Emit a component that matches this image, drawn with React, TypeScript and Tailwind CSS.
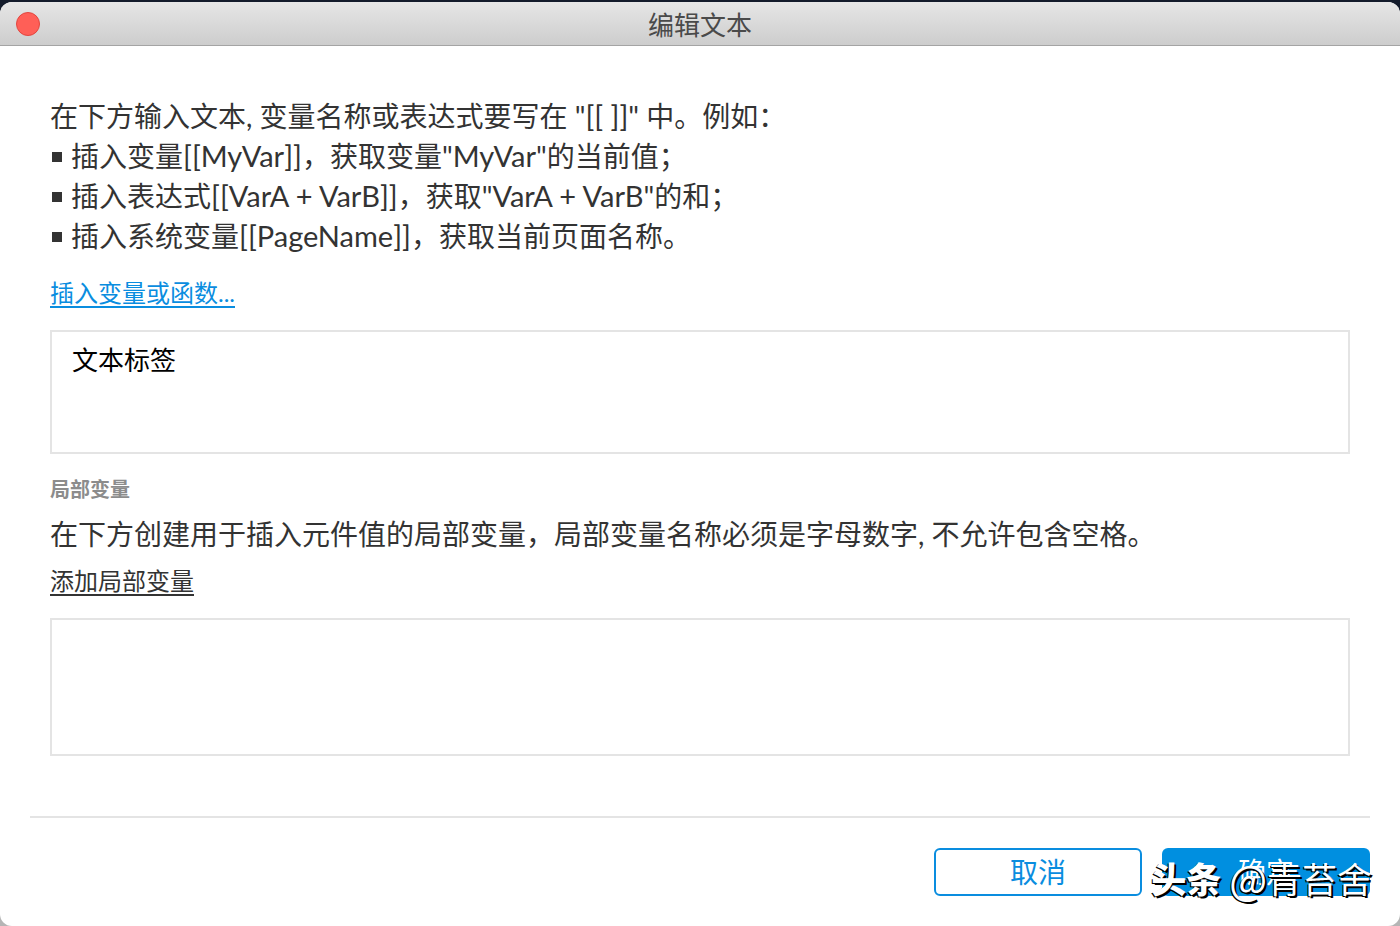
import { useState, type ReactNode } from "react";

function Code({ children }: { children: ReactNode }) {
  return <span className="text-[29px]">{children}</span>;
}

function Hint({ children }: { children: ReactNode }) {
  return (
    <li className="flex items-center gap-[9px]">
      <span className="mt-0.5 ml-0.5 size-2.5 bg-[#333333]" />
      <span>{children}</span>
    </li>
  );
}

function TitleBar() {
  return (
    <header className="relative flex h-11 shrink-0 items-center justify-center rounded-t-xl border-b border-[#a4a4a4] bg-linear-to-b from-[#e6e6e6] to-[#cdcdcd]">
      <button
        type="button"
        aria-label="关闭"
        className="absolute left-4 size-6 rounded-full border border-[#e2463f] bg-[#ff5f57]"
      />
      <h1 className="pt-0.5 text-[26px] leading-10 text-[#4a4a4a]">编辑文本</h1>
    </header>
  );
}

export default function App() {
  const [text, setText] = useState("文本标签");

  return (
    <div
      lang="zh-CN"
      className="min-h-screen bg-linear-to-b from-[#131b2b] from-50% to-[#b5b5b5] to-50% pt-0.5 font-['Lato','Noto_Sans_CJK_SC',sans-serif] text-[#333333]"
    >
      <main className="flex min-h-[calc(100vh-2px)] flex-col rounded-xl bg-white">
        <TitleBar />

        <div className="flex grow flex-col px-[50px] pt-[50px]">
          <div className="text-[28px] leading-10">
            <p>
              在下方输入文本, 变量名称或表达式要写在 <Code>"[[ ]]"</Code> 中。例如：
            </p>
            <ul>
              <Hint>
                插入变量<Code>[[MyVar]]</Code>，获取变量<Code>"MyVar"</Code>的当前值；
              </Hint>
              <Hint>
                插入表达式<Code>[[VarA + VarB]]</Code>，获取<Code>"VarA + VarB"</Code>的和；
              </Hint>
              <Hint>
                插入系统变量<Code>[[PageName]]</Code>，获取当前页面名称。
              </Hint>
            </ul>
          </div>

          <a
            href="#insert"
            className="mt-[17px] self-start text-2xl leading-10 text-[#0a8ddf] underline decoration-2 underline-offset-4"
          >
            插入变量或函数...
          </a>

          <textarea
            aria-label="文本"
            value={text}
            onChange={(e) => setText(e.target.value)}
            className="mt-[17px] h-[124px] w-full shrink-0 resize-none border-2 border-[#e4e4e4] px-5 py-2 text-[26px] leading-10 text-black outline-none"
          />

          <h2 className="mt-[19px] text-xl leading-8 font-bold text-[#8c8c8c]">局部变量</h2>
          <p className="mt-[9px] text-[28px] leading-10">
            在下方创建用于插入元件值的局部变量，局部变量名称必须是字母数字, 不允许包含空格。
          </p>
          <a
            href="#add"
            className="mt-[7px] self-start text-2xl leading-10 underline decoration-2 underline-offset-4"
          >
            添加局部变量
          </a>
          <div className="mt-[17px] min-h-[138px] border-2 border-[#e4e4e4]" />
        </div>

        <footer className="mx-[30px] mt-[60px] flex justify-end gap-5 border-t-2 border-[#e4e4e4] pt-[30px] pb-[30px] text-[28px]">
          <button
            type="button"
            className="h-12 w-52 rounded-md border-2 border-[#0a8ddf] leading-10 text-[#0a8ddf]"
          >
            取消
          </button>
          <div className="relative">
            <button type="button" className="h-12 w-52 rounded-md bg-[#008fe0] leading-10 text-white">
              确定
            </button>
            <span className="pointer-events-none absolute top-1.5 -right-0.5 flex items-center font-['Noto_Sans_CJK_SC',sans-serif] text-[35px] leading-12 whitespace-nowrap text-white [text-shadow:2px_2px_0_#000,-1px_1px_0_#000]">
              <b className="mr-2 font-black">头条</b>
              <span className="text-[40px]">@</span>
              <span>青苔舍</span>
            </span>
          </div>
        </footer>
      </main>
    </div>
  );
}
